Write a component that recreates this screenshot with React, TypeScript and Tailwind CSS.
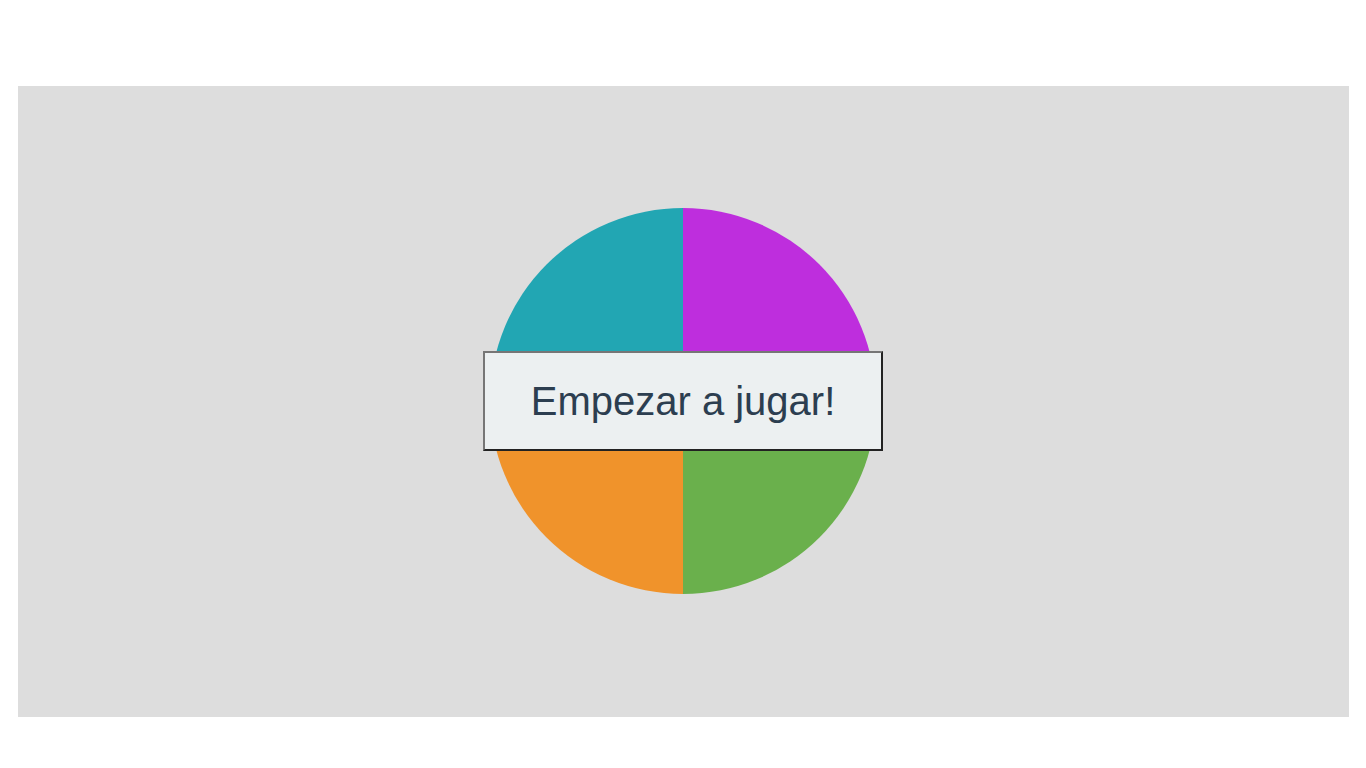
import React from 'react';

const quadrants = [
  { id: 'tl', color: 'bg-[#22a6b3]' },
  { id: 'tr', color: 'bg-[#be2edd]' },
  { id: 'bl', color: 'bg-[#f0932b]' },
  { id: 'br', color: 'bg-[#6ab04c]' },
];

const App: React.FC = () => {
  return (
    <div className="min-h-[768px] bg-white pt-[86px] pl-[18px] font-['Liberation_Sans',Arial,sans-serif]">
      <div className="h-[631px] w-[1331px] bg-[#dddddd] pt-[122px] pl-[472px]">
        <div className="relative h-[386px] w-[386px]">
          <div className="grid h-full w-full grid-cols-2 grid-rows-2 overflow-hidden rounded-full">
            {quadrants.map((q) => (
              <div key={q.id} className={q.color} />
            ))}
          </div>
          <button className="absolute left-[-7px] top-[143px] flex h-[100px] w-[400px] items-center justify-center border-2 border-t-[#767676] border-l-[#767676] border-b-[#222222] border-r-[#222222] bg-[#ecf0f1] text-[40px] leading-[46px] text-[#2c3e50]">
            Empezar a jugar!
          </button>
        </div>
      </div>
    </div>
  );
};

export default App;
